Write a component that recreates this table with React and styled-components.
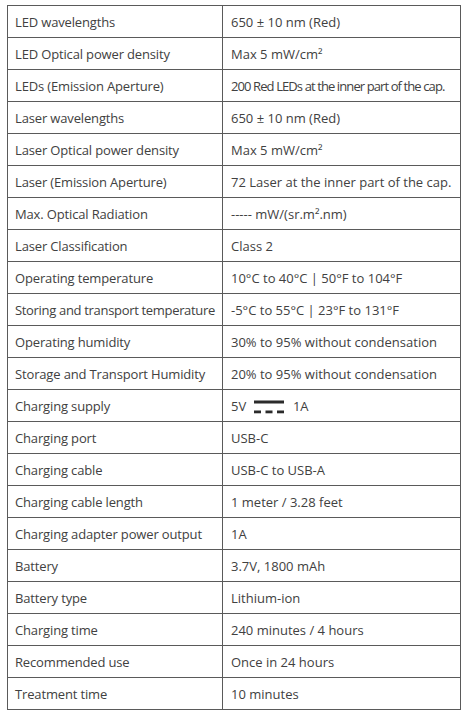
import styled, { createGlobalStyle } from "styled-components";

const GlobalStyle = createGlobalStyle`
  html, body {
    margin: 0;
    padding: 0;
    background: #ffffff;
  }
  body {
    font-family: "Open Sans", "Liberation Sans", sans-serif;
  }
`;

// [label, value, squeeze label, squeeze value]
const specs = [
  ["LED wavelengths", "650 ± 10 nm (Red)"],
  ["LED Optical power density", "Max 5 mW/cm²"],
  ["LEDs (Emission Aperture)", "200 Red LEDs at the inner part of the cap.", false, true],
  ["Laser wavelengths", "650 ± 10 nm (Red)"],
  ["Laser Optical power density", "Max 5 mW/cm²"],
  ["Laser (Emission Aperture)", "72 Laser at the inner part of the cap."],
  ["Max. Optical Radiation", "----- mW/(sr.m².nm)"],
  ["Laser Classification", "Class 2"],
  ["Operating temperature", "10°C to 40°C | 50°F to 104°F"],
  ["Storing and transport temperature", "-5°C to 55°C | 23°F to 131°F", true],
  ["Operating humidity", "30% to 95% without condensation"],
  ["Storage and Transport Humidity", "20% to 95% without condensation"],
  ["Charging supply", "DC"],
  ["Charging port", "USB-C"],
  ["Charging cable", "USB-C to USB-A"],
  ["Charging cable length", "1 meter / 3.28 feet"],
  ["Charging adapter power output", "1A"],
  ["Battery", "3.7V, 1800 mAh"],
  ["Battery type", "Lithium-ion"],
  ["Charging time", "240 minutes / 4 hours"],
  ["Recommended use", "Once in 24 hours"],
  ["Treatment time", "10 minutes"],
];

function DcSymbol() {
  return (
    <DcIcon width="31" height="14" viewBox="0 0 31 14">
      <rect x="0" y="0.5" width="30" height="3" fill="#2b2b2b" />
      <rect x="0" y="10.5" width="7" height="2.8" fill="#2b2b2b" />
      <rect x="11.5" y="10.5" width="7" height="2.8" fill="#2b2b2b" />
      <rect x="23" y="10.5" width="7" height="2.8" fill="#2b2b2b" />
    </DcIcon>
  );
}

export default function App() {
  return (
    <Page>
      <GlobalStyle />
      <SpecTable>
        <colgroup>
          <LabelCol />
          <col />
        </colgroup>
        <tbody>
          {specs.map(([label, value, tightLabel, tightValue]) => (
            <Row key={label}>
              <LabelCell $tight={tightLabel}>{label}</LabelCell>
              <ValueCell $tight={tightValue}>
                {value === "DC" ? (
                  <>
                    5V <DcSymbol /> 1A
                  </>
                ) : (
                  value
                )}
              </ValueCell>
            </Row>
          ))}
        </tbody>
      </SpecTable>
    </Page>
  );
}

const Page = styled.div`
  padding: 5px 4px 0 7px;
`;

const SpecTable = styled.table`
  border-collapse: collapse;
  width: 454px;
  table-layout: fixed;
  color: #414141;
  font-size: 13px;
`;

const LabelCol = styled.col`
  width: 215px;
`;

const Row = styled.tr`
  height: 32px;
`;

const Cell = styled.td`
  border: 1px solid #5a5a5a;
  padding: 0 7px;
  white-space: nowrap;
  vertical-align: middle;
  overflow: visible;
`;

const LabelCell = styled(Cell)`
  letter-spacing: ${(p) => (p.$tight ? "-0.32px" : "-0.15px")};
`;

const ValueCell = styled(Cell)`
  padding-left: 8px;
  letter-spacing: ${(p) => (p.$tight ? "-0.9px" : "0")};
`;

const DcIcon = styled.svg`
  display: inline-block;
  vertical-align: -3px;
  margin: 0 5px 0 4px;
`;
